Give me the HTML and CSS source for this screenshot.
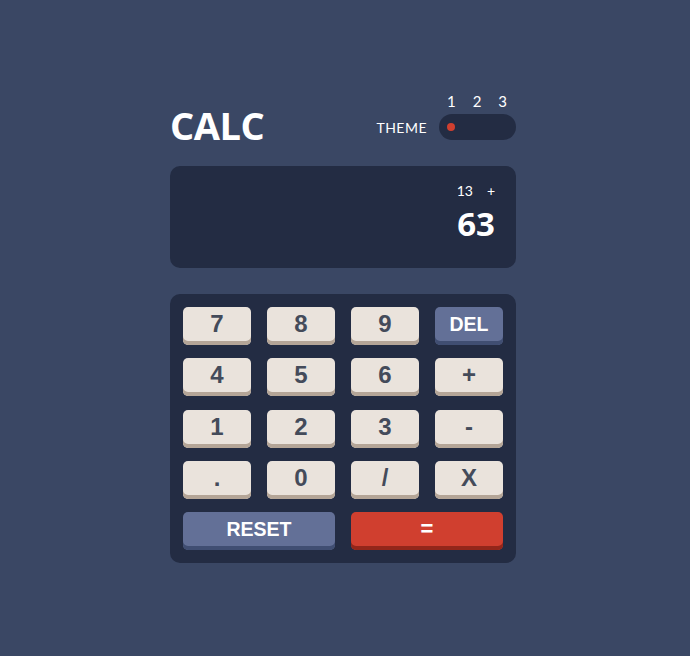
FILE: index.html
```html
<!DOCTYPE html>
<html>
    <head>
        <meta name='viewport' content='width=device-width, initial-scale=1.0'>
        <title>Calculator</title>
        <link rel="stylesheet" href="styles.css">
    </head>
    <body>
        <main class='calc'>
            <header class='top'>
                <h1 class='logo'>CALC</h1>
                <div class='theme'>
                    <span class='theme-label'>THEME</span>
                    <div class='switch'>
                        <div class='switch-nums'>
                            <span>1</span>
                            <span>2</span>
                            <span>3</span>
                        </div>
                        <div class='track'>
                            <span class='dot'></span>
                        </div>
                    </div>
                </div>
            </header>

            <section class='screen'>
                <div class='prev'>
                    <span>13</span>
                    <span>+</span>
                </div>
                <div class='result'>63</div>
            </section>

            <section class='keypad'>
                <button class='key'>7</button>
                <button class='key'>8</button>
                <button class='key'>9</button>
                <button class='key key-blue'>DEL</button>
                <button class='key'>4</button>
                <button class='key'>5</button>
                <button class='key'>6</button>
                <button class='key'>+</button>
                <button class='key'>1</button>
                <button class='key'>2</button>
                <button class='key'>3</button>
                <button class='key'>-</button>
                <button class='key'>.</button>
                <button class='key'>0</button>
                <button class='key'>/</button>
                <button class='key'>X</button>
                <button class='key key-blue key-wide'>RESET</button>
                <button class='key key-red key-wide'>=</button>
            </section>
        </main>
    </body>
</html>
```

FILE: styles.css
```css
body {
    margin: 0;
    background-color: #3a4764;
    font-family: 'Lato', sans-serif;
    color: #fff;
}
.calc {
    width: 346px;
    margin-left: 170px;
    padding-top: 94px;
}
.top {
    display: flex;
    justify-content: space-between;
    align-items: flex-end;
    margin-bottom: 26px;
}
.logo {
    margin: 0;
    font-family: 'Open Sans', sans-serif;
    font-weight: 700;
    font-size: 38px;
    line-height: 29px;
    letter-spacing: -0.5px;
}
.theme {
    display: flex;
    align-items: flex-end;
    gap: 12px;
}
.theme-label {
    font-size: 14px;
    letter-spacing: 0.5px;
    line-height: 14px;
    padding-bottom: 5px;
}
.switch-nums {
    display: flex;
    justify-content: space-between;
    padding: 0 9px 0 8px;
    font-size: 15px;
    line-height: 14px;
    margin-bottom: 6px;
}
.track {
    width: 77px;
    height: 26px;
    border-radius: 13px;
    background-color: #232c43;
    display: flex;
    align-items: center;
    padding-left: 8px;
    box-sizing: border-box;
}
.dot {
    width: 8px;
    height: 8px;
    border-radius: 50%;
    background-color: #d03f2f;
}
.screen {
    height: 102px;
    box-sizing: border-box;
    background-color: #232c43;
    border-radius: 10px;
    padding: 17px 21px 0 0;
    text-align: right;
    margin-bottom: 26px;
}
.prev {
    display: flex;
    justify-content: flex-end;
    gap: 14px;
    font-size: 14px;
    line-height: 16px;
}
.result {
    font-family: 'Open Sans', sans-serif;
    font-weight: 700;
    font-size: 33px;
    line-height: 40px;
    margin-top: 5px;
}
.keypad {
    display: grid;
    grid-template-columns: repeat(4, 68px);
    grid-auto-rows: 38px;
    column-gap: 16px;
    row-gap: 13.25px;
    padding: 13px;
    background-color: #232c43;
    border-radius: 10px;
}
.key {
    border: 0;
    border-radius: 5px;
    padding: 0 0 4px 0;
    background-color: #eae3dc;
    box-shadow: inset 0 -4px 0 #b4a597;
    color: #444b5a;
    font-family: 'Liberation Sans', Arial, sans-serif;
    font-weight: 700;
    font-size: 24px;
}
.key-blue {
    background-color: #637097;
    box-shadow: inset 0 -4px 0 #404e72;
    color: #fff;
    font-size: 19.5px;
}
.key-red {
    background-color: #d03f2f;
    box-shadow: inset 0 -4px 0 #93261a;
    color: #fff;
    font-size: 22px;
}
.key-wide {
    grid-column: span 2;
}
```
